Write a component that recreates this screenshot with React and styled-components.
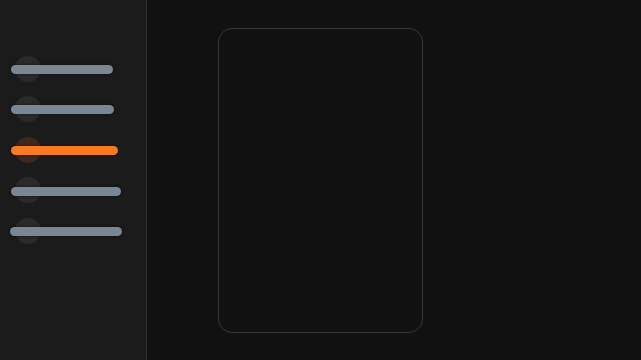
import React from "react";
import styled, { createGlobalStyle } from "styled-components";

const items = [
  { width: 102, left: 11 },
  { width: 103, left: 11 },
  { width: 107, left: 11, active: true },
  { width: 110, left: 11 },
  { width: 112, left: 10 },
];

function App() {
  return (
    <>
      <GlobalStyle />
      <Page>
        <Sidebar>
          <Menu>
            {items.map((item, i) => (
              <Item key={i}>
                <Halo $active={item.active} />
                <Bar
                  $active={item.active}
                  $left={item.left}
                  style={{ width: item.width }}
                />
              </Item>
            ))}
          </Menu>
        </Sidebar>
        <Main>
          <Card />
        </Main>
      </Page>
    </>
  );
}

export default App;

const GlobalStyle = createGlobalStyle`
  html, body {
    margin: 0;
    padding: 0;
    background: #111111;
    font-family: "Inter", "Liberation Sans", sans-serif;
  }
`;

const Page = styled.div`
  display: flex;
  width: 641px;
  height: 360px;
  overflow: hidden;
`;

const Sidebar = styled.aside`
  width: 147px;
  flex-shrink: 0;
  background: #1b1b1b;
  border-right: 1px solid #2e2e2e;
  box-sizing: border-box;
`;

const Menu = styled.ul`
  list-style: none;
  margin: 0;
  padding: 49px 0 0;
  display: flex;
  flex-direction: column;
`;

const Item = styled.li`
  position: relative;
  height: 40.6px;
  display: flex;
  align-items: center;
`;

const Halo = styled.span`
  position: absolute;
  left: 15px;
  top: 6.5px;
  width: 26px;
  height: 26px;
  border-radius: 50%;
  background: ${(p) =>
    p.$active ? "rgba(249, 115, 22, 0.17)" : "rgba(255, 255, 255, 0.065)"};
`;

const Bar = styled.span`
  position: relative;
  margin-left: ${(p) => p.$left}px;
  height: 9px;
  border-radius: 5px;
  background: ${(p) => (p.$active ? "#f97a1f" : "#7b8695")};
  box-shadow: 0 0 3px rgba(0, 0, 0, 0.6);
`;

const Main = styled.main`
  flex: 1;
  display: flex;
  align-items: center;
  padding-left: 71px;
`;

const Card = styled.div`
  width: 205px;
  height: 305px;
  box-sizing: border-box;
  border: 1.5px solid #363636;
  border-radius: 14px;
  background: #111111;
`;
